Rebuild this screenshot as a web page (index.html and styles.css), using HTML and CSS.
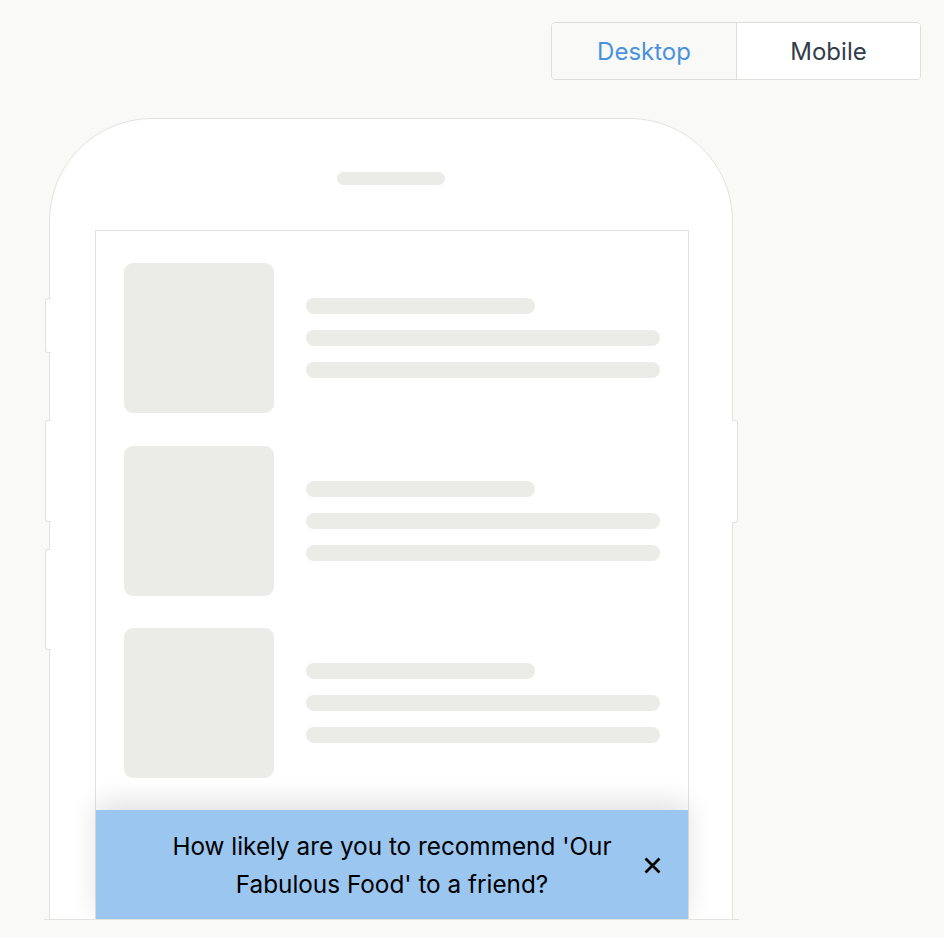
FILE: index.html
```html
<!DOCTYPE html>
<html lang="en">
<head>
<meta charset="utf-8">
<title>Preview</title>
<link rel="stylesheet" href="styles.css">
</head>
<body>
  <header class="topbar">
    <div class="toggle">
      <button class="toggle-btn is-desktop">Desktop</button>
      <button class="toggle-btn is-active">Mobile</button>
    </div>
  </header>

  <main class="stage">
    <span class="bump bump-left b1"></span>
    <span class="bump bump-left b2"></span>
    <span class="bump bump-left b3"></span>
    <span class="bump bump-right b4"></span>

    <div class="phone">
      <div class="speaker"></div>
      <div class="screen">
        <div class="feed">
          <div class="item">
            <div class="thumb"></div>
            <div class="lines">
              <div class="line short"></div>
              <div class="line"></div>
              <div class="line"></div>
            </div>
          </div>
          <div class="item">
            <div class="thumb"></div>
            <div class="lines">
              <div class="line short"></div>
              <div class="line"></div>
              <div class="line"></div>
            </div>
          </div>
          <div class="item">
            <div class="thumb"></div>
            <div class="lines">
              <div class="line short"></div>
              <div class="line"></div>
              <div class="line"></div>
            </div>
          </div>
        </div>

        <div class="banner">
          <p class="banner-text">How likely are you to recommend 'Our Fabulous Food' to a friend?</p>
          <button class="close" aria-label="Close">
            <svg width="17" height="17" viewBox="0 0 17 17"><path d="M1.5 1.5L15.5 15.5M15.5 1.5L1.5 15.5" stroke="#000" stroke-width="2.7" stroke-linecap="butt" fill="none"/></svg>
          </button>
        </div>
      </div>
    </div>
  </main>
</body>
</html>
```

FILE: styles.css
```css
* { box-sizing: border-box; }

html, body {
  margin: 0;
  padding: 0;
  background: #f9f9f7;
  font-family: "Inter", "Liberation Sans", sans-serif;
}

.topbar {
  display: flex;
  justify-content: flex-end;
  padding: 22px 23px 0 0;
  height: 118px;
}

.toggle {
  display: flex;
  height: 58px;
  border: 1px solid #dededb;
  border-radius: 4px;
  overflow: hidden;
}

.toggle-btn {
  width: 184px;
  border: 0;
  margin: 0;
  padding: 0;
  font-family: "Inter", "Liberation Sans", sans-serif;
  font-size: 24px;
  font-weight: 400;
  background: #f9f9f7;
  color: #4a92e0;
}

.toggle-btn.is-active {
  background: #ffffff;
  color: #333d4a;
  border-left: 1px solid #dededb;
}

.stage {
  position: relative;
  margin-left: 44px;
  width: 695px;
  height: 802px;
  overflow: hidden;
  border-bottom: 1px solid #e2e2de;
}

.bump {
  position: absolute;
  z-index: 2;
  width: 6px;
  background: #ffffff;
  border: 1px solid #e2e2de;
}
.bump-left { left: 1px; border-right: 0; border-radius: 3px 0 0 3px; }
.bump-right { left: 688px; border-left: 0; border-radius: 0 3px 3px 0; }
.b1 { top: 180px; height: 55px; }
.b2 { top: 302px; height: 102px; }
.b3 { top: 431px; height: 101px; }
.b4 { top: 302px; height: 103px; }

.phone {
  margin-left: 5px;
  width: 684px;
  height: 900px;
  background: #ffffff;
  border: 1px solid #e2e2de;
  border-radius: 103px 103px 0 0;
  padding-top: 53px;
}

.speaker {
  width: 108px;
  height: 13px;
  margin: 0 auto 0 287px;
  border-radius: 7px;
  background: #ebebe7;
}

.screen {
  position: relative;
  margin: 45px 0 0 45px;
  width: 594px;
  height: 700px;
  border: 1px solid #e2e2de;
  border-bottom: 0;
  background: #ffffff;
}

.feed {
  padding: 32px 28px 0 28px;
  display: flex;
  flex-direction: column;
  gap: 32.5px;
}

.item {
  display: flex;
  align-items: center;
  gap: 32px;
}

.thumb {
  width: 150px;
  height: 150px;
  flex: none;
  border-radius: 9px;
  background: #ebebe7;
}

.lines {
  flex: 1;
  display: flex;
  flex-direction: column;
  gap: 16px;
}

.line {
  height: 16px;
  border-radius: 8px;
  background: #ebebe7;
}
.line.short { width: 229px; }

.banner {
  position: absolute;
  left: 0;
  right: 0;
  top: 579px;
  height: 110px;
  background: #9bc6f0;
  display: flex;
  align-items: center;
  justify-content: center;
  box-shadow: 0 -8px 24px rgba(0, 0, 0, 0.12);
}

.banner-text {
  margin: 0;
  width: 470px;
  text-align: center;
  font-family: "Inter", "Liberation Sans", sans-serif;
  font-size: 24.3px;
  line-height: 38px;
  color: #000000;
}

.close {
  position: absolute;
  right: 27px;
  top: 47px;
  width: 17px;
  height: 17px;
  padding: 0;
  border: 0;
  background: transparent;
  display: block;
}
.close svg { display: block; }
```
